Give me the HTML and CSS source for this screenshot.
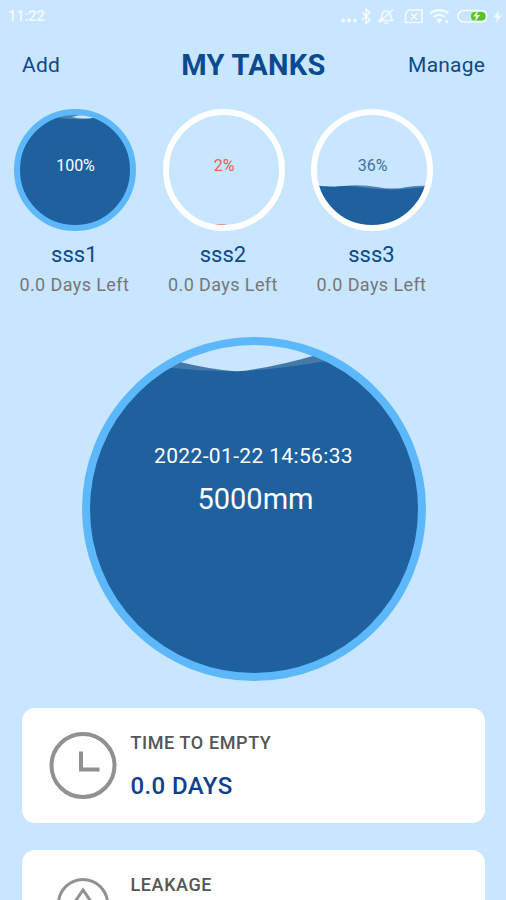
FILE: index.html
```html
<!DOCTYPE html>
<html lang="en">
<head>
    <meta charset="UTF-8">
    <meta name="viewport" content="width=device-width, initial-scale=1.0">
    <title>My Tanks</title>
    <link rel="stylesheet" href="styles.css">
</head>
<body>
    <div class="status-bar">
        <span class="time">11:22</span>
        <svg class="status-icons" viewBox="0 0 172 22" width="172" height="22">
            <g fill="none" stroke="#f4faff" stroke-width="1.6">
                <!-- bluetooth -->
                <path d="M28 7.500l8 7.500-4 3.500V4l4 3.500-8 7.500"/>
                <!-- muted bell -->
                <path d="M46 15.500c2-1.500 1.500-4 2.200-6.500 1-4 7-4 8 0 .7 2.500.3 5 2.300 6.500zM50.500 18h4M59 4.500l-14 13"/>
                <!-- no sim -->
                <path d="M75 5H88V17.500H71.500V8.500zM77 8.500l6 6M83 8.500l-6 6"/>
                <!-- battery -->
                <rect x="124" y="5.500" width="29" height="11.500" rx="5.700"/>
                <!-- wifi -->
                <path d="M96 8.500c5.500-4.500 13-4.500 18.500 0M99.500 12c3.500-2.700 8-2.700 11.500 0" stroke-width="2.200"/>
            </g>
            <path d="M102 14.500q3.500-2 6.500 0l-3.200 4zM111.500 15h2.500v3H111.500zM165 5l-5.500 7.500h3.500l-1.500 6 6-8h-3.500z" fill="#f4faff"/>
            <g fill="#f4faff">
                <circle cx="9" cy="15.500" r="1.900"/>
                <circle cx="15" cy="15.500" r="1.900"/>
                <circle cx="21" cy="15.500" r="1.900"/>
            </g>
            <rect x="137" y="7" width="14.500" height="8.500" rx="4" fill="#58c322"/>
            <path d="M144 5.500l-5 6h3l-1 5 5-6.500h-3z" fill="#f4faff"/>
        </svg>
    </div>

    <div class="header">
        <a class="link">Add</a>
        <h1>MY TANKS</h1>
        <a class="link manage">Manage</a>
    </div>

    <div class="tanks">
        <div class="tank">
            <div class="gauge">
                <svg viewBox="0 0 122 122">
                    <circle cx="61" cy="61" r="56" fill="#1f619e"/>
                    <path d="M43 8Q61 3 80 8Q75 11 61 10Q50 10 43 8z" fill="#4c83b3"/>
                    <path d="M58 8Q70 4 82 8Q72 11 58 8z" fill="#c8e6ff"/>
                    <circle cx="61" cy="61" r="58" fill="none" stroke="#5db8fb" stroke-width="6"/>
                </svg>
                <span class="percent">100%</span>
            </div>
            <h2>sss1</h2>
            <p>0.0 Days Left</p>
        </div>
        <div class="tank">
            <div class="gauge">
                <svg viewBox="0 0 122 122">
                    <path d="M46 117Q56 113 68 117z" fill="#e8705f"/>
                    <circle cx="61" cy="61" r="58" fill="none" stroke="#fff" stroke-width="6"/>
                </svg>
                <span class="percent low">2%</span>
            </div>
            <h2>sss2</h2>
            <p>0.0 Days Left</p>
        </div>
        <div class="tank">
            <div class="gauge">
                <svg viewBox="0 0 122 122">
                    <clipPath id="small"><circle cx="61" cy="61" r="57"/></clipPath>
                    <g clip-path="url(#small)">
                        <path d="M0 78Q18 78 32 77Q50 75 66 78Q82 81 96 78Q108 76 122 77V122H0z" fill="#4c83b3"/>
                        <path d="M0 76Q10 77 24 78Q36 76 48 78Q66 80 80 80.500Q98 80 122 77V122H0z" fill="#1f619e"/>
                    </g>
                    <circle cx="61" cy="61" r="58" fill="none" stroke="#fff" stroke-width="6"/>
                </svg>
                <span class="percent normal">36%</span>
            </div>
            <h2>sss3</h2>
            <p>0.0 Days Left</p>
        </div>
    </div>

    <div class="gauge big">
        <svg viewBox="0 0 344 344">
            <clipPath id="large"><circle cx="172" cy="172" r="165"/></clipPath>
            <g clip-path="url(#large)">
                <path d="M0 0L98 25Q126 32 155 34.500Q190 31 238 17L344 0V344H0z" fill="#437aa9"/>
                <path d="M0 0L90 31Q120 34 155 34.500Q200 32 250 23L344 0V344H0z" fill="#1f619e"/>
            </g>
            <circle cx="172" cy="172" r="168" fill="none" stroke="#5db8fb" stroke-width="8"/>
        </svg>
        <div class="reading">
            <span class="date">2022-01-22 14:56:33</span>
            <span class="level">5000mm</span>
        </div>
    </div>

    <div class="card">
        <svg class="icon" viewBox="0 0 70 70" fill="none" stroke="#919191" stroke-width="4">
            <circle cx="35" cy="34.500" r="31.500"/>
            <path d="M33 20.500V38.500H51.500"/>
        </svg>
        <div>
            <h3>TIME TO EMPTY</h3>
            <strong>0.0 DAYS</strong>
        </div>
    </div>
    <div class="card last">
        <svg class="icon" viewBox="0 0 70 70" fill="none" stroke="#919191" stroke-width="3">
            <circle cx="35" cy="31" r="24.500"/>
            <path d="M35 17l-11 16a13 13 0 1 0 22 0z"/>
        </svg>
        <div>
            <h3>LEAKAGE</h3>
        </div>
    </div>
</body>
</html>
```

FILE: styles.css
```css
*
{
  margin: 0;
  padding: 0;
  box-sizing: border-box;
}
body{
  height: 900px;
  overflow: hidden;
  background: #c8e6ff;
  font-family: Roboto, sans-serif;
  color: #10488a;
}
.status-bar{
  display: flex;
  justify-content: space-between;
  height: 32px;
  padding-left: 8px;
  color: #f4faff;
}
.time{
  font-size: 15px;
  font-weight: 500;
  line-height: 33px;
  letter-spacing: -0.3px;
}
.status-icons{
  margin-top: 5px;
}
.header{
  display: grid;
  grid-template-columns: 1fr auto 1fr;
  align-items: center;
  height: 66px;
  padding: 0 21px 0 22px;
}
.header h1{
  font-size: 29px;
  font-weight: 700;
  letter-spacing: 0.3px;
  color: #0b4a8f;
}
.link{
  font-size: 21px;
  letter-spacing: 0.2px;
}
.manage{
  text-align: right;
}
.tanks{
  display: flex;
  padding-top: 11px;
}
.tank{
  width: 148.6px;
  text-align: center;
}
.gauge{
  display: grid;
  width: 122px;
  height: 122px;
  margin-left: 14px;
}
.gauge svg,
.percent,
.reading{
  grid-area: 1 / 1;
}
.percent{
  padding: 47px 0 0 1px;
  font-size: 16px;
  line-height: 19px;
  color: #fff;
}
.percent.low{
  color: #ea6150;
}
.percent.normal{
  color: #3d719f;
}
.tank h2{
  margin-top: 11px;
  font-size: 22px;
  font-weight: 400;
  line-height: 26px;
  color: #10488a;
}
.tank p{
  margin-top: 6px;
  font-size: 18px;
  line-height: 22px;
  letter-spacing: 0.4px;
  white-space: nowrap;
  color: #777;
}
.gauge.big{
  width: 344px;
  height: 344px;
  margin: 41px 0 0 81.5px;
}
.reading{
  display: flex;
  flex-direction: column;
  align-items: center;
  padding-top: 106px;
  color: #fff;
}
.date{
  font-size: 21px;
  line-height: 26px;
  letter-spacing: 0.35px;
}
.level{
  margin-top: 12px;
  padding-left: 4px;
  font-size: 29px;
  line-height: 36px;
}
.card{
  display: flex;
  height: 115px;
  margin: 27px 21px 0 22px;
  padding: 23px 26px;
  border-radius: 13px;
  background: #fff;
}
.card.last{
  height: 50px;
  padding-bottom: 0;
  border-radius: 13px 13px 0 0;
  overflow: hidden;
}
.icon{
  flex: none;
  width: 70px;
  height: 70px;
  margin-right: 12.5px;
}
.card h3{
  margin-top: 1px;
  font-size: 18px;
  font-weight: 500;
  line-height: 22px;
  letter-spacing: 0.6px;
  color: #555;
}
.card strong{
  display: block;
  margin-top: 18px;
  font-size: 24px;
  font-weight: 500;
  line-height: 28px;
  letter-spacing: 0.4px;
  color: #0b4290;
}
```
